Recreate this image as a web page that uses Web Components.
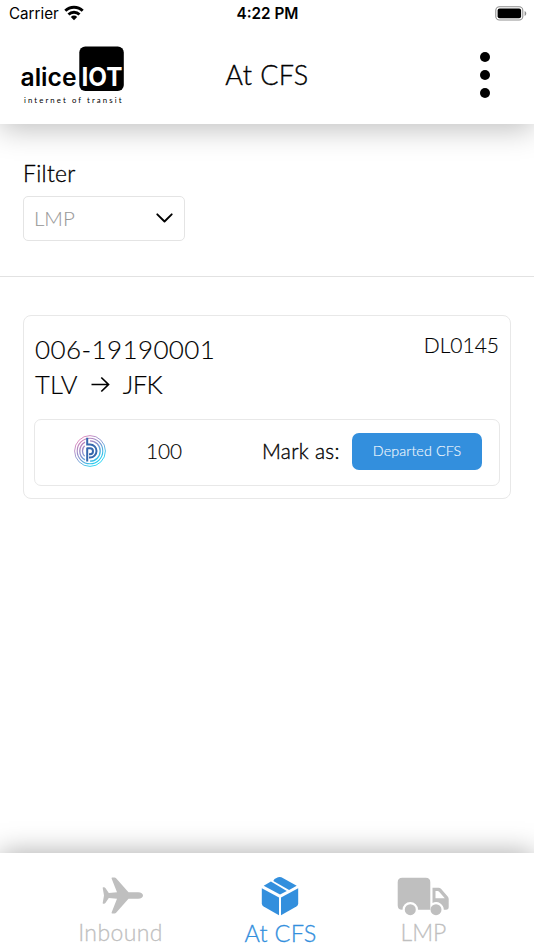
<!DOCTYPE html>
<html lang="en">
<head>
<meta charset="utf-8">
<title>At CFS</title>
<style>
    html, body {
        margin: 0;
        height: 100%;
        background: #fff;
    }
    body {
        font-family: Lato, "Open Sans", sans-serif;
        font-weight: 300;
        color: #000;
        overflow: hidden;
        --blue: #338fdd;
        --line: #e8e8e8;
    }
</style>
</head>
<body>
<cfs-app></cfs-app>

<script>
class StatusBar extends HTMLElement {
    connectedCallback() {
        this.attachShadow({ mode: 'open' });
        this.shadowRoot.innerHTML = `
            <style>
                :host {
                    display: grid;
                    grid-template-columns: 1fr auto 1fr;
                    align-items: center;
                    height: 27px;
                    padding: 1px 8px 0 9px;
                    box-sizing: border-box;
                    font: 400 15.2px/26px Inter, sans-serif;
                }
                .carrier { display: flex; align-items: center; gap: 5px; }
                .time { font-weight: 600; font-size: 15.3px; }
                .battery { justify-self: end; margin-right: -1px; }
                svg { display: block; margin-top: -2px; }
            </style>
            <div class="carrier">
                <span>Carrier</span>
                <svg width="20" height="16" viewBox="0 0 20 16" fill="none" stroke="#000" stroke-width="2.9">
                    <path d="M1.3 5.8a12.4 12.4 0 0 1 17.4 0"/>
                    <path d="M4.5 9.5a7.9 7.9 0 0 1 11 0"/>
                    <path d="M10 15.2l-3.2-3.3a4.6 4.6 0 0 1 6.4 0z" fill="#000" stroke="none"/>
                </svg>
            </div>
            <span class="time">4:22 PM</span>
            <svg class="battery" width="32" height="15" viewBox="0 0 32 15">
                <rect x=".8" y=".8" width="27" height="13.2" rx="3.6" fill="#fff" stroke="#8f8f8f" stroke-width="1.1"/>
                <rect x="2.6" y="2.6" width="23.5" height="9.6" rx="2"/>
                <path d="M29.6 5v5c2.2-.8 2.2-4.2 0-5z" fill="#8f8f8f"/>
            </svg>
        `;
    }
}

class BrandLogo extends HTMLElement {
    connectedCallback() {
        this.attachShadow({ mode: 'open' });
        this.shadowRoot.innerHTML = `
            <style>
                :host { display: block; width: 106px; height: 62px; }
                svg { display: block; font-family: Inter, sans-serif; }
            </style>
            <svg width="106" height="62" viewBox="0 0 106 62">
                <rect x="59.3" y="1.5" width="44.5" height="44.5" rx="6"/>
                <text x=".5" y="41" font-size="24.5" font-weight="600" textLength="56" lengthAdjust="spacingAndGlyphs">alice</text>
                <text x="61.5" y="41" font-size="25.5" font-weight="700" fill="#fff" textLength="41" lengthAdjust="spacingAndGlyphs">IOT</text>
                <text x="4" y="58" font-size="7.8" font-weight="400" font-family="Lato, sans-serif" textLength="97.5">internet of transit</text>
            </svg>
        `;
    }
}

class AppHeader extends HTMLElement {
    connectedCallback() {
        this.attachShadow({ mode: 'open' });
        this.shadowRoot.innerHTML = `
            <style>
                :host {
                    display: block;
                    height: 124px;
                    background: #fff;
                    box-shadow: 0 5px 28px rgba(0, 0, 0, 0.26);
                    z-index: 1;
                }
                .row {
                    display: grid;
                    grid-template-columns: 1fr auto 1fr;
                    align-items: center;
                    height: 97px;
                    padding: 0 44px 0 20px;
                    box-sizing: border-box;
                }
                brand-logo { align-self: start; margin-top: 18px; }
                h1 {
                    margin: 0 0 0 24px;
                    font-weight: 300;
                    font-size: 27px;
                    line-height: 95px;
                    height: 97px;
                    letter-spacing: 0.45px;
                    -webkit-text-stroke: 0.35px;
                }
                .menu {
                    justify-self: end;
                    display: grid;
                    gap: 8px;
                    margin-top: -2px;
                    padding: 0;
                    border: 0;
                    background: none;
                }
                .menu i { width: 10px; height: 10px; border-radius: 50%; background: #000; }
            </style>
            <status-bar></status-bar>
            <div class="row">
                <brand-logo></brand-logo>
                <h1><slot></slot></h1>
                <button class="menu" aria-label="Menu"><i></i><i></i><i></i></button>
            </div>
        `;
    }
}

class FilterSelect extends HTMLElement {
    connectedCallback() {
        this.attachShadow({ mode: 'open' });
        this.shadowRoot.innerHTML = `
            <style>
                :host {
                    display: block;
                    height: 153px;
                    box-sizing: border-box;
                    padding: 34px 23px 0;
                    border-bottom: 1px solid #e2e2e2;
                }
                label {
                    display: block;
                    height: 38px;
                    line-height: 31px;
                    font-size: 22.8px;
                    letter-spacing: 0.35px;
                    -webkit-text-stroke: 0.35px;
                }
                .select {
                    display: flex;
                    align-items: center;
                    justify-content: space-between;
                    width: 162px;
                    height: 45px;
                    box-sizing: border-box;
                    padding: 0 11px 1px 10px;
                    border: 1px solid #e4e4e4;
                    border-radius: 5px;
                    color: #999;
                    font-size: 20.5px;
                    -webkit-text-stroke: 0.1px;
                }
            </style>
            <label><slot name="label"></slot></label>
            <div class="select">
                <slot></slot>
                <svg width="17" height="10" viewBox="0 0 17 10" fill="none" stroke="#000" stroke-width="1.9" stroke-linecap="round" stroke-linejoin="round">
                    <path d="M1.3 1.3l7.2 7.2 7.2-7.2"/>
                </svg>
            </div>
        `;
    }
}

class PartnerLogo extends HTMLElement {
    connectedCallback() {
        this.attachShadow({ mode: 'open' });
        this.shadowRoot.innerHTML = `
            <style>
                :host { display: block; width: 32px; height: 32px; }
                svg { display: block; }
            </style>
            <svg width="32" height="32" viewBox="0 0 32 32" fill="none">
                <defs>
                    <linearGradient id="ring" x1="6" y1="4" x2="24" y2="28" gradientUnits="userSpaceOnUse">
                        <stop offset="0" stop-color="#dc7fb7"/>
                        <stop offset=".5" stop-color="#7d92cf"/>
                        <stop offset="1" stop-color="#19d3f3"/>
                    </linearGradient>
                </defs>
                <g stroke="url(#ring)">
                    <circle cx="16" cy="16" r="15.4" stroke-width=".9"/>
                    <circle cx="16" cy="16" r="12.8" stroke-width="1.1"/>
                    <path d="M11 7.100a10.200 10.200 0 0 0 0 17.800M16 5.800a10.200 10.200 0 0 1 0 20.400" stroke-width="1.300"/>
                    <path d="M10.600 10.800a7.400 7.400 0 0 0 0 10.400" stroke-width="1.300"/>
                </g>
                <g stroke="#3568ad" stroke-width="2">
                    <path d="M13.200 2.800v6.700H16a6.500 6.500 0 0 1 0 13h-1"/>
                    <path d="M13.200 26.500V13.200H16a3 3 0 0 1 0 6h-1" stroke-linejoin="round"/>
                </g>
            </svg>
        `;
    }
}

class ShipmentCard extends HTMLElement {
    connectedCallback() {
        this.attachShadow({ mode: 'open' });
        this.shadowRoot.innerHTML = `
            <style>
                :host {
                    display: block;
                    box-sizing: border-box;
                    height: 184px;
                    margin: 38px 23px 0;
                    padding: 15px 10px 0;
                    border: 1px solid var(--line);
                    border-radius: 8px;
                    -webkit-text-stroke: 0.15px;
                }
                .top { display: flex; justify-content: space-between; height: 88px; }
                .lines { padding: 1px 0 0 1px; }
                .awb, .route { font-size: 26px; line-height: 35px; }
                .awb { letter-spacing: 0.4px; }
                .route { display: flex; align-items: center; gap: 13px; font-size: 25.6px; }
                .from { letter-spacing: 0.2px; }
                .to { letter-spacing: -0.7px; }
                .flight { font-size: 21px; line-height: 28px; padding-right: 1px; }
                .parcel {
                    display: grid;
                    grid-template-columns: 39px 32px 40px 116px auto 1fr;
                    align-items: center;
                    box-sizing: border-box;
                    height: 67px;
                    padding-bottom: 3px;
                    border: 1px solid var(--line);
                    border-radius: 7px;
                }
                partner-logo { grid-column: 2; }
                .count { grid-column: 4; font-size: 20.8px; padding-bottom: 1px; }
                .mark {
                    font-size: 20.8px;
                    letter-spacing: 0.3px;
                    padding-bottom: 1px;
                    -webkit-text-stroke: 0.35px;
                }
                button {
                    justify-self: end;
                    width: 130px;
                    height: 37px;
                    margin-right: 17px;
                    padding: 0 0 1px;
                    border: 0;
                    border-radius: 7px;
                    background: var(--blue);
                    color: #f0f7fd;
                    font: 300 14.3px Lato, sans-serif;
                    letter-spacing: 0.1px;
                }
            </style>
            <div class="top">
                <div class="lines">
                    <div class="awb"><slot name="awb"></slot></div>
                    <div class="route">
                        <span class="from"><slot name="from"></slot></span>
                        <svg width="19" height="17" viewBox="0 0 19 17" fill="none" stroke="#000" stroke-width="1.7">
                            <path d="M.5 8.500h17M10.300 1.500l7.200 7-7.200 7"/>
                        </svg>
                        <span class="to"><slot name="to"></slot></span>
                    </div>
                </div>
                <div class="flight"><slot name="flight"></slot></div>
            </div>
            <div class="parcel">
                <partner-logo></partner-logo>
                <span class="count"><slot name="count"></slot></span>
                <span class="mark">Mark as:</span>
                <button><slot name="action"></slot></button>
            </div>
        `;
    }
}

const icons = {
    plane: `<svg width="41" height="38" viewBox="0 0 41 38" fill="currentColor">
        <path d="M9.700 1.700C9.400.9 9.800.500 10.500.500h2c.7 0 1.200.3 1.600.8L26.500 15.200h9.800c2.800 0 4.700 1.500 4.700 3.300s-1.900 3.300-4.700 3.300h-9.800L14.100 35.700c-.4.500-.9.800-1.600.8h-2c-.7 0-1.100-.4-.8-1.200l5.300-13.500-8.200-.8L3.400 26c-.4.600-.8.800-1.400.8H1.300c-.5 0-.7-.4-.6-.8L2 18.500.7 11c-.1-.5.1-.8.600-.8H2c.6 0 1 .2 1.400.8L6.800 16l8.200-.8z"/>
    </svg>`,
    box: `<svg width="38" height="40" viewBox="0 0 38 40" fill="currentColor">
        <path d="M13.500 3.100L17 1.300q1.700-.8 3.400 0L35.700 9.700 28.100 14 12.300 4.900z"/>
        <path d="M9.900 5.500L25.800 14.900 19 18.500 2.700 9.800z"/>
        <path d="M.8 12.300L18 21.500v17.800L2.600 30.600Q.8 29.500.8 27.500z"/>
        <path d="M37.200 12.300L20 21.500v17.800l15.400-8.700q1.800-1.100 1.800-3.100z"/>
    </svg>`,
    truck: `<svg width="53" height="39" viewBox="0 0 53 39" fill="currentColor">
        <path d="M5.200.7h23.600q4.500 0 4.500 4.500v27.600h-12.200a7.800 7.800 0 0 0-15.600 0H5.200Q.7 32.800.7 28.300V5.200Q.7.7 5.200.7z"/>
        <path fill-rule="evenodd" d="M35.500 10.700h6q1.600 0 2.700 1.200l6.500 7.500q1 1.200 1 2.700v8q0 2.700-2.700 2.700h-2.200a7.800 7.800 0 0 0-11.300-6.900zM38.500 14v7.300h9.300l-5.700-6.600q-.6-.7-1.500-.7z"/>
        <circle cx="13.300" cy="32.700" r="5.500"/>
        <circle cx="39" cy="32.700" r="5.500"/>
    </svg>`
};

class TabItem extends HTMLElement {
    connectedCallback() {
        this.attachShadow({ mode: 'open' });
        this.shadowRoot.innerHTML = `
            <style>
                :host {
                    display: grid;
                    grid-template-rows: 40px 30px;
                    justify-items: center;
                    justify-content: center;
                    color: #bfbfbf;
                    font-size: 23px;
                    line-height: 30px;
                    -webkit-text-stroke: 0.3px;
                }
                :host([icon="plane"]) { letter-spacing: 0.4px; }
                :host([icon="plane"]) svg { margin-left: 4px; }
                :host([active]) { color: var(--blue); padding-top: 1px; font-size: 23.5px; letter-spacing: 0.3px; }
                :host([active]) svg { margin-top: -2px; }
                svg { display: block; }
            </style>
            ${icons[this.getAttribute('icon')]}
            <span><slot></slot></span>
        `;
    }
}

class TabBar extends HTMLElement {
    connectedCallback() {
        this.attachShadow({ mode: 'open' });
        this.shadowRoot.innerHTML = `
            <style>
                :host {
                    display: grid;
                    grid-template-columns: 90px 76px 56px;
                    gap: 77px 77px;
                    box-sizing: border-box;
                    height: 97px;
                    padding: 24px 0 0 75.5px;
                    background: #fff;
                    box-shadow: 0 0 26px rgba(0, 0, 0, 0.34);
                }
            </style>
            <slot></slot>
        `;
    }
}

class CfsApp extends HTMLElement {
    connectedCallback() {
        this.attachShadow({ mode: 'open' });
        this.shadowRoot.innerHTML = `
            <style>
                :host { display: flex; flex-direction: column; height: 950px; }
                main { flex: 1; }
            </style>
            <app-header>At CFS</app-header>
            <main>
                <filter-select><span slot="label">Filter</span>LMP</filter-select>
                <shipment-card>
                    <span slot="awb">006-19190001</span>
                    <span slot="from">TLV</span>
                    <span slot="to">JFK</span>
                    <span slot="flight">DL0145</span>
                    <span slot="count">100</span>
                    <span slot="action">Departed CFS</span>
                </shipment-card>
            </main>
            <tab-bar>
                <tab-item icon="plane">Inbound</tab-item>
                <tab-item icon="box" active>At CFS</tab-item>
                <tab-item icon="truck">LMP</tab-item>
            </tab-bar>
        `;
    }
}

customElements.define('status-bar', StatusBar);
customElements.define('brand-logo', BrandLogo);
customElements.define('app-header', AppHeader);
customElements.define('filter-select', FilterSelect);
customElements.define('partner-logo', PartnerLogo);
customElements.define('shipment-card', ShipmentCard);
customElements.define('tab-item', TabItem);
customElements.define('tab-bar', TabBar);
customElements.define('cfs-app', CfsApp);
</script>
</body>
</html>
